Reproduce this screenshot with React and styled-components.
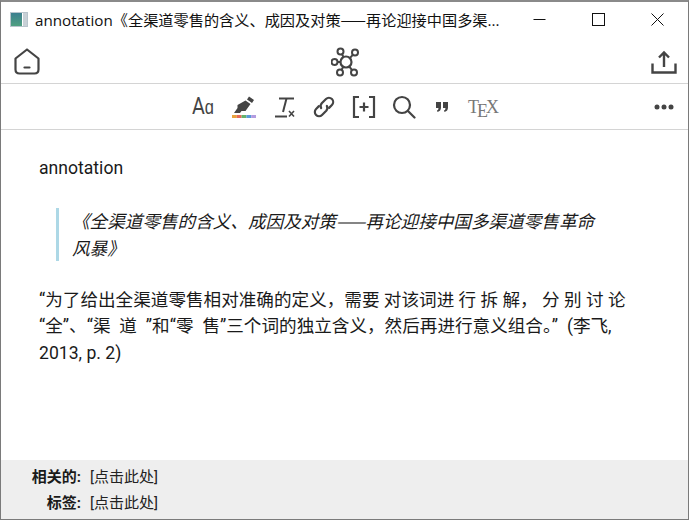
import React from "react";
import styled, { createGlobalStyle } from "styled-components";

const GlobalStyle = createGlobalStyle`
  html, body {
    margin: 0;
    padding: 0;
    background: #fff;
  }
`;

const App = () => {
  return (
    <>
      <GlobalStyle />
      <Window>
        <TitleBar>
          <AppIcon />
          <Title>annotation《全渠道零售的含义、成因及对策<Dash>——</Dash>再论迎接中国多渠...</Title>
          <WinButtons>
            <WinButton>
              <svg width="13" height="13" viewBox="0 0 13 13">
                <path d="M0.5 6.5h12" stroke="#111" fill="none" />
              </svg>
            </WinButton>
            <WinButton>
              <svg width="13" height="13" viewBox="0 0 13 13">
                <rect x="0.5" y="0.5" width="12" height="12" stroke="#111" fill="none" />
              </svg>
            </WinButton>
            <WinButton>
              <svg width="13" height="13" viewBox="0 0 13 13">
                <path d="M0.5 0.5l12 12M12.5 0.5l-12 12" stroke="#111" fill="none" />
              </svg>
            </WinButton>
          </WinButtons>
        </TitleBar>

        <TopBar>
          <IconBtn>
            <svg width="26" height="27" viewBox="0 0 26 27" fill="none" stroke="#444" strokeWidth="2.2" strokeLinejoin="round" strokeLinecap="round">
              <path d="M13 1.500 L24.500 10.500 V21.500 Q24.500 25.500 20.500 25.500 H5.500 Q1.500 25.500 1.500 21.500 V10.500 Z" />
              <path d="M10.500 19.500h5" />
            </svg>
          </IconBtn>
          <IconBtn>
            <svg width="30" height="30" viewBox="0 0 30 30" fill="none" stroke="#444" strokeWidth="2">
              <circle cx="15" cy="15" r="5.5" strokeWidth="2.2" />
              <circle cx="9.5" cy="4.5" r="3" />
              <circle cx="24" cy="5.5" r="3" />
              <circle cx="3.5" cy="15" r="3" />
              <circle cx="9" cy="25.5" r="3" />
              <circle cx="23" cy="25.5" r="3" />
              <path d="M11 7.2l1.6 3M21.8 7.8l-3 3.4M6.5 15h3M10.6 23l1.6-3.400M21 23.200l-2.600-3.600" />
            </svg>
          </IconBtn>
          <IconBtn>
            <svg width="26" height="26" viewBox="0 0 26 26" fill="none" stroke="#444" strokeWidth="2.4">
              <path d="M1.500 14.500V23.500H24.500V14.500" />
              <path d="M13 18V3.500M8 8.500L13 3.500L18 8.500" />
            </svg>
          </IconBtn>
        </TopBar>

        <FormatBar>
          <FormatGroup>
            <AaIcon>A<small>ɑ</small></AaIcon>
            <FormatIcon>
              <svg width="24" height="24" viewBox="0 0 24 24">
                <path d="M17 1.500l5 3.500-2 3-5-3.500zM13.500 5.500l5 3.500-5 7-4 0-1.500 2-6 0 3.500-5 0-3z" fill="#444" />
                <rect x="0" y="20" width="4.800" height="3" fill="#e8a33d" />
                <rect x="4.800" y="20" width="4.800" height="3" fill="#e56a5a" />
                <rect x="9.600" y="20" width="4.800" height="3" fill="#66b26b" />
                <rect x="14.400" y="20" width="4.800" height="3" fill="#5a9bd8" />
                <rect x="19.200" y="20" width="4.800" height="3" fill="#b39ce0" />
              </svg>
            </FormatIcon>
            <FormatIcon>
              <svg width="24" height="24" viewBox="0 0 24 24" fill="none" stroke="#444" strokeWidth="2">
                <path d="M7 3.500H22" />
                <path d="M14.500 3.500L11 17" />
                <path d="M3 21.500H15" />
                <path d="M17 16l5 5.500M22 16l-5 5.500" strokeWidth="1.600" />
              </svg>
            </FormatIcon>
            <FormatIcon>
              <svg width="24" height="24" viewBox="0 0 24 24" fill="none" stroke="#444" strokeWidth="2.200" strokeLinecap="round">
                <g transform="rotate(-45 12 12)">
                  <path d="M9 7.800H5a4.200 4.200 0 0 0 0 8.400h6a4.200 4.200 0 0 0 3.800-3" />
                  <path d="M15 16.200h4a4.200 4.200 0 0 0 0-8.400h-6a4.200 4.200 0 0 0-3.800 3" />
                </g>
              </svg>
            </FormatIcon>
            <FormatIcon>
              <svg width="24" height="24" viewBox="0 0 24 24" fill="none" stroke="#444" strokeWidth="2.200">
                <path d="M7 2H2V22H7M17 2H22V22H17" />
                <path d="M12 7.500V16.500M7.500 12H16.500" />
              </svg>
            </FormatIcon>
            <FormatIcon>
              <svg width="24" height="24" viewBox="0 0 24 24" fill="none" stroke="#444" strokeWidth="2.200" strokeLinecap="round">
                <circle cx="10" cy="10" r="8" />
                <path d="M16 16L22.500 22.500" />
              </svg>
            </FormatIcon>
            <QuoteIcon>
              <svg width="12" height="10" viewBox="0 0 12 10" fill="#444">
                <path d="M0 0h5v5.500Q5 9 1.500 10L1 8.500Q2.500 8 2.500 6H0zM7 0h5v5.500Q12 9 8.500 10L8 8.500Q9.500 8 9.500 6H7z" />
              </svg>
            </QuoteIcon>
            <TexIcon>T<sub>E</sub>X</TexIcon>
          </FormatGroup>
          <MoreIcon>
            <svg width="20" height="6" viewBox="0 0 20 6" fill="#444">
              <circle cx="3" cy="3" r="2.500" />
              <circle cx="10" cy="3" r="2.500" />
              <circle cx="17" cy="3" r="2.500" />
            </svg>
          </MoreIcon>
        </FormatBar>

        <Content>
          <Para>annotation</Para>
          <Quote>《全渠道零售的含义、成因及对策——再论迎接中国多渠道零售革命风暴》</Quote>
          <Para>
            “为了给出全渠道零售相对准确的定义，需要 对该词进 行 拆 解， 分 别 讨 论
            <br />
            <WideLine>“全”、“渠 道 ”和“零 售”三个词的独立含义，然后再进行意义组合。” (李飞,</WideLine>
            <br />
            2013, p. 2)
          </Para>
        </Content>

        <Footer>
          <FooterRow>
            <FooterLabel>相关的:</FooterLabel>
            <FooterValue>[点击此处]</FooterValue>
          </FooterRow>
          <FooterRow>
            <FooterLabel>标签:</FooterLabel>
            <FooterValue>[点击此处]</FooterValue>
          </FooterRow>
        </Footer>
      </Window>
    </>
  );
};

export default App;

const Window = styled.div`
  box-sizing: border-box;
  width: 689px;
  height: 520px;
  display: flex;
  flex-flow: column;
  background: #fff;
  border: 1px solid #7a7a7a;
  border-top: 2px solid #8a8a8a;
  overflow: hidden;
  font-family: Roboto, "Noto Sans CJK SC", sans-serif;
  color: #1a1a1a;
`;

const TitleBar = styled.div`
  height: 34px;
  padding-bottom: 4px;
  flex: none;
  display: flex;
  align-items: center;
  padding-left: 9px;
`;

const AppIcon = styled.div`
  width: 18px;
  height: 15px;
  margin-right: 7px;
  flex: none;
  border: 1px solid #b8c4cc;
  box-sizing: border-box;
  background:
    linear-gradient(90deg, transparent 0 68%, #fff 68% 78%, #c8d0d6 78%),
    linear-gradient(180deg, #3b7f8f, #4f9f80);
`;

const Title = styled.div`
  flex: 1;
  font-family: "Open Sans", "Noto Sans CJK SC", sans-serif;
  font-size: 15.2px;
  color: #111;
  white-space: nowrap;
  overflow: hidden;
`;

const Dash = styled.span`
  font-family: "Noto Sans CJK SC", sans-serif;
`;

const WinButtons = styled.div`
  display: flex;
  margin-right: 1px;
`;

const WinButton = styled.div`
  width: 59px;
  height: 34px;
  display: flex;
  align-items: center;
  justify-content: center;
`;

const TopBar = styled.div`
  height: 43px;
  flex: none;
  display: flex;
  align-items: center;
  justify-content: space-between;
  padding: 0 11px 0 13px;
  border-bottom: 1px solid #d4d4d4;
`;

const IconBtn = styled.div`
  display: flex;
`;

const FormatBar = styled.div`
  height: 45px;
  flex: none;
  display: flex;
  align-items: center;
  padding: 0 14px 0 191px;
  border-bottom: 1px solid #d4d4d4;
`;

const FormatGroup = styled.div`
  flex: 1;
  display: flex;
  align-items: center;
  gap: 16px;
`;

const FormatIcon = styled.div`
  display: flex;
  width: 24px;
  height: 24px;
`;

const AaIcon = styled.div`
  width: 24px;
  font-family: Roboto, sans-serif;
  font-size: 24px;
  line-height: 24px;
  color: #444;
  white-space: nowrap;
  transform: scaleX(0.82);
  transform-origin: left center;
  small {
    font-size: 20px;
  }
`;

const QuoteIcon = styled.div`
  display: flex;
  width: 12px;
  margin: 0 4px;
`;

const TexIcon = styled.div`
  font-family: "Liberation Serif", serif;
  font-size: 18px;
  line-height: 24px;
  color: #777;
  letter-spacing: -2px;
  sub {
    font-size: 18px;
    vertical-align: -4px;
    line-height: 0;
  }
`;

const MoreIcon = styled.div`
  display: flex;
`;

const Content = styled.div`
  flex: 1;
  padding: 25px 40px 0 38px;
  font-size: 17.6px;
  line-height: 26.5px;
`;

const Para = styled.p`
  margin: 0;
`;

const WideLine = styled.span`
  word-spacing: 4.5px;
`;

const Quote = styled.blockquote`
  margin: 26.5px 39px 25.5px 17px;
  padding: 0 0 0 13px;
  border-left: 3px solid #add8e6;
  font-family: "Noto Sans CJK SC", sans-serif;
  font-style: italic;
`;

const Footer = styled.div`
  height: 59px;
  flex: none;
  background: #eeeeee;
  display: flex;
  flex-flow: column;
  justify-content: center;
  gap: 4px;
  font-size: 15px;
  line-height: 22px;
`;

const FooterRow = styled.div`
  display: flex;
  gap: 9px;
`;

const FooterLabel = styled.div`
  width: 80px;
  text-align: right;
  font-weight: 700;
`;

const FooterValue = styled.div`
  color: #222;
`;
